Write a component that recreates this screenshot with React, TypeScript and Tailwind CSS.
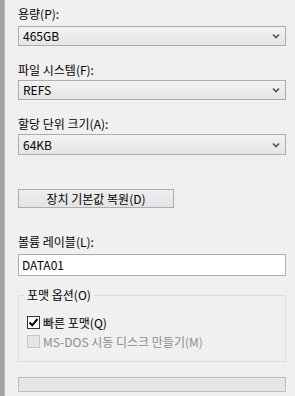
import React from "react";

const font = { fontFamily: '"Noto Sans CJK KR", "Noto Sans", sans-serif' };

const Chevron = () => (
  <svg width="8" height="6" viewBox="0 0 8 6" className="shrink-0">
    <path d="M1 1.5 L4 4.5 L7 1.5" fill="none" stroke="#555555" strokeWidth="1.7" />
  </svg>
);

const Select = ({ value, h }: { value: string; h: string }) => (
  <div
    className={`flex items-center justify-between w-[268px] ${h} border border-[#acacac] bg-gradient-to-b from-[#f2f2f2] to-[#e5e5e5] pl-[4px] pr-[5px] text-[12px] text-black`}
  >
    <span className="leading-none">{value}</span>
    <Chevron />
  </div>
);

const Label = ({ text, mt }: { text: string; mt: string }) => (
  <div className={`${mt} h-[16px] text-[12px] leading-[16px] text-black`}>{text}</div>
);

export default function App() {
  return (
    <div className="flex w-[295px] h-[396px] bg-[#f0f0f0] overflow-hidden" style={font}>
      {/* Window edge */}
      <div className="w-[5px] h-full bg-[#a3a3a3] border-r border-[#b9b9b9]" />

      <div className="flex flex-col pl-[13px]">
        <Label text="용량(P):" mt="mt-[6px]" />
        <div className="mt-[4px]">
          <Select value="465GB" h="h-[20px]" />
        </div>

        <Label text="파일 시스템(F):" mt="mt-[16px]" />
        <div className="mt-[2px]">
          <Select value="REFS" h="h-[20px]" />
        </div>

        <Label text="할당 단위 크기(A):" mt="mt-[16px]" />
        <div className="mt-[2px]">
          <Select value="64KB" h="h-[21px]" />
        </div>

        {/* Restore defaults */}
        <button className="mt-[34px] w-[156px] h-[19px] border border-[#adadad] bg-gradient-to-b from-[#efefef] to-[#e3e3e3] text-[12px] leading-none text-black">
          장치 기본값 복원(D)
        </button>

        <Label text="볼륨 레이블(L):" mt="mt-[26px]" />
        <div className="mt-[4px] w-[268px] h-[22px] border border-[#acacac] bg-white pl-[3px] flex items-center text-[12px] text-black">
          DATA01
        </div>

        {/* Format options group */}
        <div className="relative mt-[19px] w-[268px] h-[67px] border border-[#dcdcdc]">
          <span className="absolute left-[5px] -top-[9px] px-[3px] bg-[#f0f0f0] text-[12px] leading-[16px] text-black">
            포맷 옵션(O)
          </span>
          <div className="flex flex-col pl-[8px] pt-[20px] gap-[6px]">
            <div className="flex items-center gap-[3px] h-[13px]">
              <div className="w-[13px] h-[13px] border border-[#333333] bg-white flex items-center justify-center">
                <svg width="11" height="11" viewBox="0 0 11 11">
                  <path d="M1.5 5.5 L4.2 8.3 L9.5 2" fill="none" stroke="#000" strokeWidth="2" />
                </svg>
              </div>
              <span className="text-[12px] leading-none text-black">빠른 포맷(Q)</span>
            </div>
            <div className="flex items-center gap-[3px] h-[13px]">
              <div className="w-[13px] h-[13px] border border-[#c5c5c5] bg-[#e6e6e6]" />
              <span className="text-[12px] leading-none text-[#8d8d8d]">
                MS-DOS 시동 디스크 만들기(M)
              </span>
            </div>
          </div>
        </div>

        {/* Progress bar */}
        <div className="mt-[15px] w-[268px] h-[15px] border border-[#bcbcbc] bg-[#e6e6e6]" />
      </div>
    </div>
  );
}
